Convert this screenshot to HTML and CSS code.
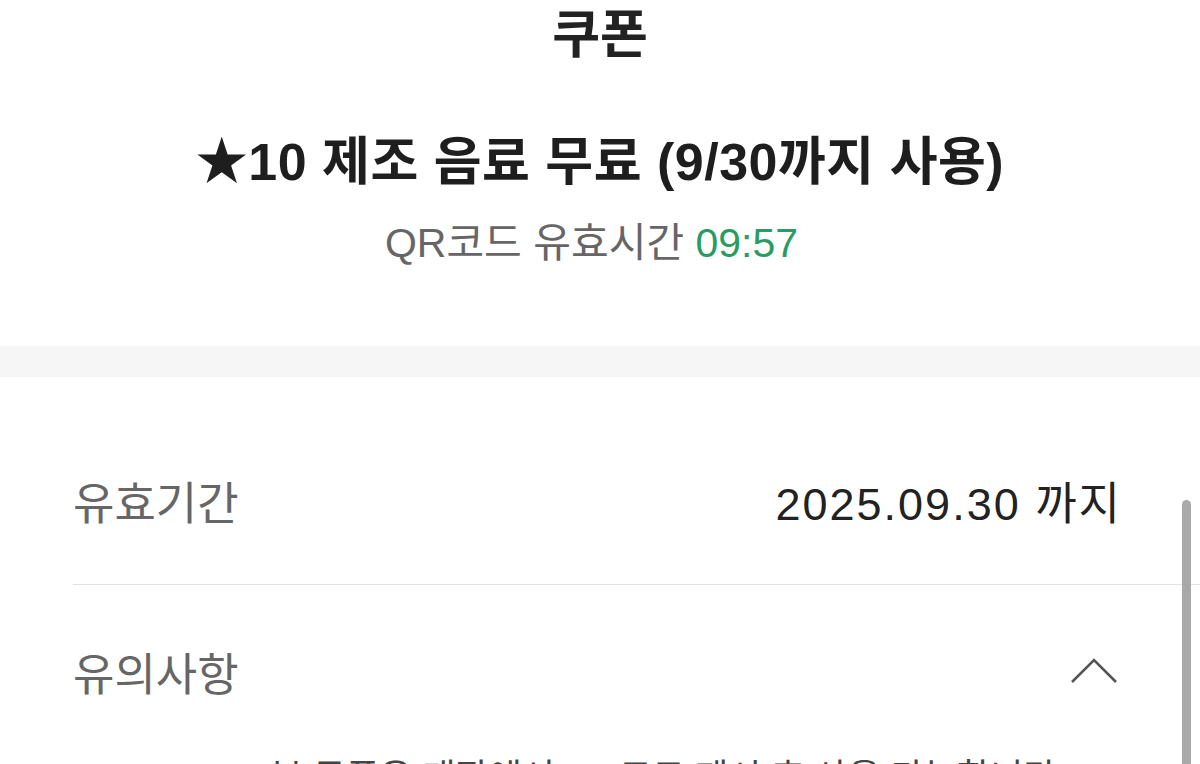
FILE: index.html
```html
<!DOCTYPE html>
<html lang="ko">
<head>
<meta charset="utf-8">
<title>쿠폰</title>
<link rel="stylesheet" href="styles.css">
</head>
<body>
<div id="container">

<div id="header">
 <h1>쿠폰</h1>
 <div class="coupon-name">★10 제조 음료 무료 (9/30까지 사용)</div>
 <div class="timer">QR코드 유효시간 <span class="time">09:57</span></div>
</div>

<div class="band"></div>

<ul class="info">
 <li class="row">
  <span class="label">유효기간</span>
  <span class="value">2025.09.30 까지</span>
 </li>
 <li class="row">
  <span class="label">유의사항</span>
  <svg class="chevron" width="48" height="28" viewBox="0 0 48 28"><polyline points="2,25 24,3 46,25" fill="none" stroke="#555" stroke-width="2.6"/></svg>
 </li>
</ul>

<p class="notice">본 쿠폰은 매장에서 QR코드 제시 후 사용 가능합니다.</p>

</div>
<div class="scrollbar"></div>
</body>
</html>
```
FILE: styles.css
```css
body{margin:0;padding:0;background-color:#ffffff;font-family:"Liberation Sans","Noto Sans CJK KR",sans-serif;color:#222222;overflow:hidden;}
#container{width:1200px;height:764px;overflow:hidden;}
#header{text-align:center;}
h1{margin:0;font-size:52px;line-height:70px;font-weight:bold;color:#222222;}
.coupon-name{margin-top:57px;font-size:52px;line-height:70px;font-weight:bold;color:#1e1e1e;letter-spacing:0.5px;}
.timer{margin-top:21px;padding-right:17px;font-size:41px;line-height:50px;color:#666666;}
.timer .time{color:#2a9c63;}
.band{margin-top:78px;height:31px;background-color:#f6f6f6;}
ul.info{margin:40px 0 0 73px;padding:0;list-style:none;}
.row{display:flex;align-items:center;justify-content:space-between;padding-right:78px;font-size:45px;}
.row:first-child{height:167px;border-bottom:1px solid #e2e2e2;}
.row:last-child{height:172px;}
.label{color:#666666;}
.value{color:#222222;letter-spacing:2px;}
.chevron{margin-right:4px;}
.notice{margin:-4px 0 0 270px;font-size:36px;line-height:50px;color:#444444;}
.scrollbar{position:fixed;right:9px;top:500px;bottom:0;width:9px;background-color:#a9a9a9;border-radius:5px 5px 0 0;}
```
